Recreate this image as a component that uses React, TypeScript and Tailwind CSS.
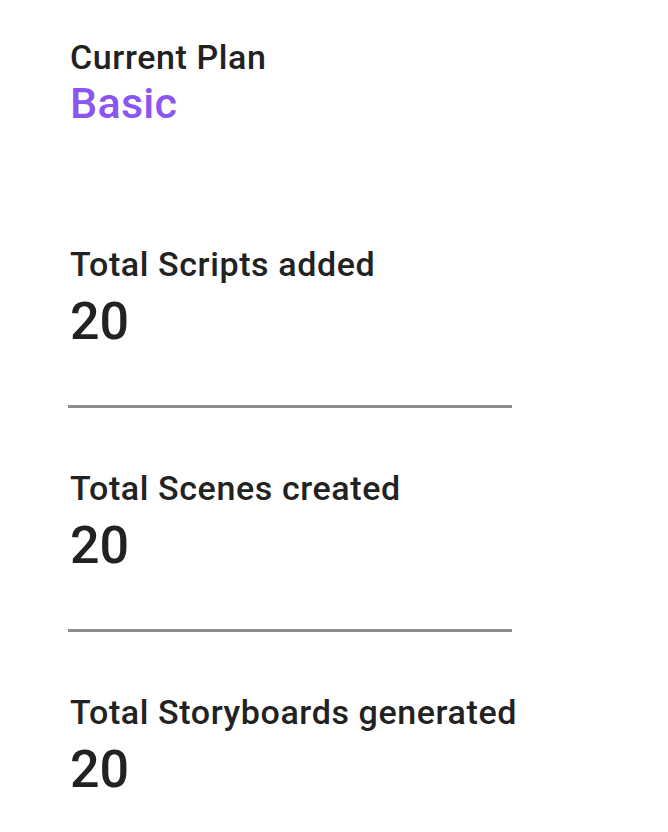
const stats = [
  { label: "Total Scripts added", value: 20 },
  { label: "Total Scenes created", value: 20 },
  { label: "Total Storyboards generated", value: 20 },
];

export default function App() {
  return (
    <div
      className="min-h-screen bg-white pl-[70px] pt-[40px] text-[#222222]"
      style={{ fontFamily: "Roboto, 'Noto Sans', sans-serif" }}
    >
      <div className="text-[34px] font-medium leading-none tracking-[0.6px]">
        Current Plan
      </div>
      <div className="mt-[8px] text-[43px] font-medium leading-none tracking-[0.3px] text-[#8b55f2]">
        Basic
      </div>

      <div className="mt-[122px] w-[442px]">
        {stats.map((s, i) => (
          <div key={s.label}>
            {i > 0 && <div className="-ml-[2px] h-[3px] bg-[#8c8c8c]" />}
            <div
              className={`${i > 0 ? "mt-[63px]" : ""} whitespace-nowrap text-[34px] font-medium leading-none tracking-[0.6px]`}
            >
              {s.label}
            </div>
            <div className="mt-[15px] mb-[57px] text-[52px] font-medium leading-none">
              {s.value}
            </div>
          </div>
        ))}
      </div>
    </div>
  );
}
